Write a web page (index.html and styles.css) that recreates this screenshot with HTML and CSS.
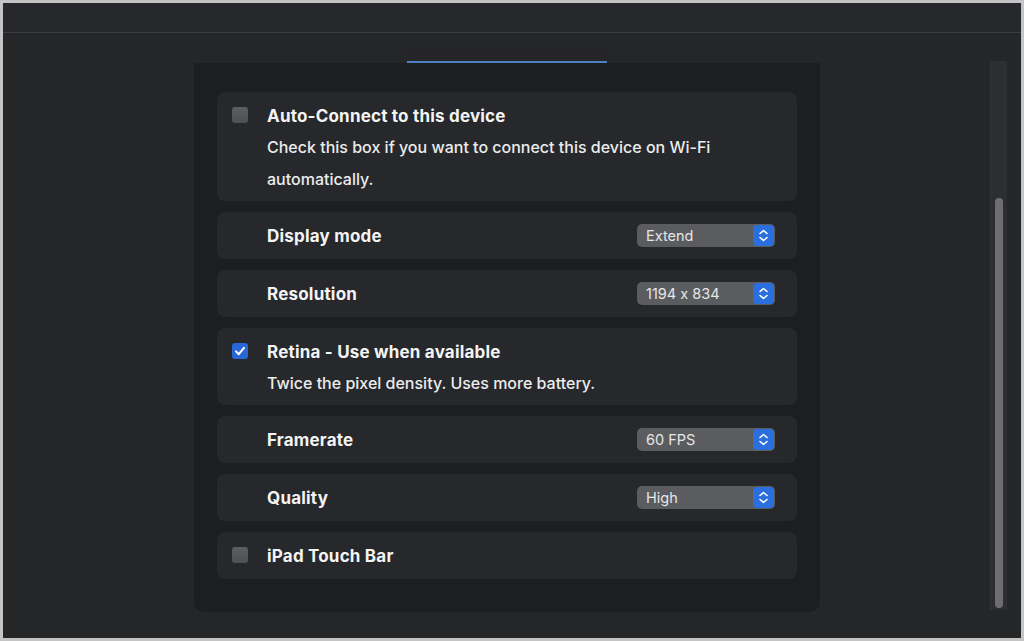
FILE: index.html
```html
<!DOCTYPE html>
<html lang="en">

<head>
  <meta charset="UTF-8">
  <title>Device settings</title>
  <link rel="stylesheet" href="styles.css">
</head>

<body>

  <div class="frame">
    <div class="titlebar"></div>

    <div class="main">
      <div class="column">
        <div class="tab-edge"></div>

        <div class="panel">

          <div class="card">
            <span class="check"></span>
            <div class="card__text">
              <div class="card__title">Auto-Connect to this device</div>
              <div class="card__desc">Check this box if you want to connect this device on Wi-Fi<br>automatically.</div>
            </div>
          </div>

          <div class="card">
            <span class="spacer"></span>
            <div class="card__text">
              <div class="card__title">Display mode</div>
            </div>
            <div class="select"><span>Extend</span><span class="stepper"><svg viewBox="0 0 21 21" width="21" height="21"><path d="M7 8.5 L10.5 5.5 L14 8.5 M7 12.5 L10.5 15.5 L14 12.5" fill="none" stroke="#fff" stroke-width="1.6" stroke-linecap="round" stroke-linejoin="round"/></svg></span></div>
          </div>

          <div class="card">
            <span class="spacer"></span>
            <div class="card__text">
              <div class="card__title">Resolution</div>
            </div>
            <div class="select"><span>1194 x 834</span><span class="stepper"><svg viewBox="0 0 21 21" width="21" height="21"><path d="M7 8.5 L10.5 5.5 L14 8.5 M7 12.5 L10.5 15.5 L14 12.5" fill="none" stroke="#fff" stroke-width="1.6" stroke-linecap="round" stroke-linejoin="round"/></svg></span></div>
          </div>

          <div class="card">
            <span class="check check--on"><svg viewBox="0 0 16 16" width="16" height="16"><path d="M4 8.4 L6.8 11.2 L12 4.8" fill="none" stroke="#fff" stroke-width="2" stroke-linecap="round" stroke-linejoin="round"/></svg></span>
            <div class="card__text">
              <div class="card__title">Retina - Use when available</div>
              <div class="card__desc">Twice the pixel density. Uses more battery.</div>
            </div>
          </div>

          <div class="card">
            <span class="spacer"></span>
            <div class="card__text">
              <div class="card__title">Framerate</div>
            </div>
            <div class="select"><span>60 FPS</span><span class="stepper"><svg viewBox="0 0 21 21" width="21" height="21"><path d="M7 8.5 L10.5 5.5 L14 8.5 M7 12.5 L10.5 15.5 L14 12.5" fill="none" stroke="#fff" stroke-width="1.6" stroke-linecap="round" stroke-linejoin="round"/></svg></span></div>
          </div>

          <div class="card">
            <span class="spacer"></span>
            <div class="card__text">
              <div class="card__title">Quality</div>
            </div>
            <div class="select"><span>High</span><span class="stepper"><svg viewBox="0 0 21 21" width="21" height="21"><path d="M7 8.5 L10.5 5.5 L14 8.5 M7 12.5 L10.5 15.5 L14 12.5" fill="none" stroke="#fff" stroke-width="1.6" stroke-linecap="round" stroke-linejoin="round"/></svg></span></div>
          </div>

          <div class="card">
            <span class="check"></span>
            <div class="card__text">
              <div class="card__title">iPad Touch Bar</div>
            </div>
          </div>

        </div>
      </div>

      <div class="scrollbar">
        <div class="scrollbar__thumb"></div>
      </div>
    </div>
  </div>

</body>

</html>
```

FILE: styles.css
```css
html,
body {
  margin: 0;
  padding: 0;
}

body {
  font-family: Inter, "Noto Sans", sans-serif;
  font-feature-settings: "calt" 0;
  background-color: #c4c4c4;
  color: #f2f2f2;
}

.frame {
  box-sizing: border-box;
  width: 1024px;
  height: 641px;
  border: 3px solid #c4c4c4;
  background-color: #252628;
  display: flex;
  flex-direction: column;
}

.titlebar {
  height: 29px;
  background-color: #27282b;
  border-bottom: 1px solid #3b3c3f;
}

.main {
  display: flex;
  padding-top: 28px;
}

.column {
  margin-left: 191px;
  width: 626px;
}

.tab-edge {
  width: 200px;
  height: 2px;
  margin-left: 213px;
  background-color: #4f7fc4;
  box-shadow: 0 -4px 8px rgba(70, 40, 70, 0.35);
}

.panel {
  box-sizing: border-box;
  height: 549px;
  padding: 29px 23px 0;
  background-color: #1c1e1f;
  border-radius: 0 0 10px 10px;
  display: flex;
  flex-direction: column;
  gap: 11px;
}

.card {
  display: flex;
  align-items: flex-start;
  padding: 14px 22px 6px 15px;
  background-color: #26282c;
  border-radius: 8px;
  min-height: 27px;
}

.check,
.spacer {
  flex: none;
  width: 16px;
  height: 16px;
  margin-top: 1px;
  margin-right: 19px;
}

.check {
  box-sizing: border-box;
  border-radius: 3px;
  background: linear-gradient(#5c5d61, #4f5054);
}

.check--on {
  background: #2767d8;
}

.check svg {
  display: block;
}

.card__text {
  flex: 1;
}

.card__title {
  font-size: 17px;
  line-height: 20px;
  font-weight: 700;
  letter-spacing: 0.2px;
  color: #f4f4f4;
}

.card__desc {
  margin-top: 5px;
  font-size: 16px;
  line-height: 32px;
  font-weight: 500;
  color: #ececec;
}

.select {
  box-sizing: border-box;
  width: 138px;
  height: 23px;
  margin-top: -2px;
  padding: 1px 1px 1px 9px;
  display: flex;
  align-items: center;
  justify-content: space-between;
  background-color: #5b5c5f;
  border-radius: 5px;
  font-size: 14.5px;
  color: #e6e6e6;
}

.stepper {
  width: 21px;
  height: 21px;
  border-radius: 4px;
  background-color: #2a6fdd;
}

.stepper svg {
  display: block;
}

.scrollbar {
  box-sizing: border-box;
  margin-left: 170px;
  width: 17px;
  height: 549px;
  padding: 137px 4px 2px;
  background-color: #2d2e31;
  border-left: 1px solid #333437;
}

.scrollbar__thumb {
  height: 100%;
  background-color: #6e6e6e;
  border-radius: 5px;
}
```
